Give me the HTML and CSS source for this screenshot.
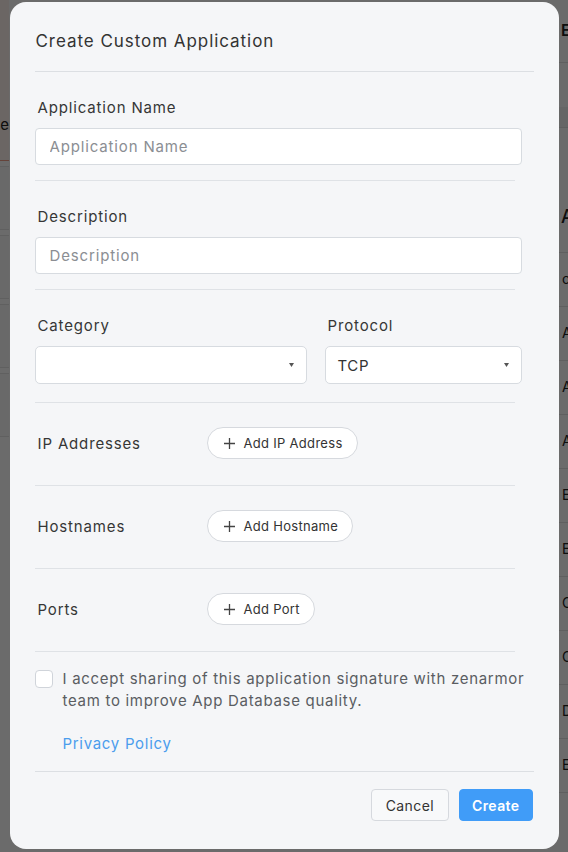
FILE: index.html
```html
<!DOCTYPE html>
<html lang="en">
<head>
    <meta charset="UTF-8">
    <meta name="viewport" content="width=device-width, initial-scale=1.0">
    <title>Create Custom Application</title>
    <link rel="stylesheet" href="styles.css">
</head>
<body>

    <!-- page behind the dialog -->
    <div class="page">
        <div class="page-left">
            <div class="notice"><span>Disable</span></div>
            <div class="lrow"></div>
            <div class="lrow"></div>
            <div class="lrow"></div>
            <div class="lrow"></div>
        </div>
        <div class="page-right">
            <div class="rhead">Engine</div>
            <div class="rband"></div>
            <div class="rtitle">Apps</div>
            <div class="rrow">cloud</div>
            <div class="rrow">Amazon</div>
            <div class="rrow">Apple</div>
            <div class="rrow">Azure</div>
            <div class="rrow">Ebay</div>
            <div class="rrow">Email</div>
            <div class="rrow">Chat</div>
            <div class="rrow">Cdn</div>
            <div class="rrow">Dns</div>
            <div class="rrow">Etc</div>
        </div>
    </div>

    <div class="overlay">
        <div class="modal">
            <div class="modal-title">Create Custom Application</div>

            <div class="field">
                <label for="appName">Application Name</label>
                <input type="text" id="appName" placeholder="Application Name">
            </div>
            <hr class="sep">

            <div class="field">
                <label for="appDesc">Description</label>
                <input type="text" id="appDesc" placeholder="Description">
            </div>
            <hr class="sep">

            <div class="field-pair">
                <div class="field grow">
                    <label>Category</label>
                    <div class="select"><span></span><svg width="5" height="4" viewBox="0 0 5 4"><path d="M0 0h5L2.5 4z" fill="#555"/></svg></div>
                </div>
                <div class="field proto">
                    <label>Protocol</label>
                    <div class="select"><span>TCP</span><svg width="5" height="4" viewBox="0 0 5 4"><path d="M0 0h5L2.5 4z" fill="#555"/></svg></div>
                </div>
            </div>
            <hr class="sep last">

            <div class="list-row">
                <span class="row-label">IP Addresses</span>
                <button class="add-btn"><svg width="11" height="11" viewBox="0 0 11 11"><path d="M5.5 0v11M0 5.5h11" stroke="#444" stroke-width="1.3"/></svg>Add IP Address</button>
            </div>
            <hr class="sep flat">

            <div class="list-row">
                <span class="row-label">Hostnames</span>
                <button class="add-btn"><svg width="11" height="11" viewBox="0 0 11 11"><path d="M5.5 0v11M0 5.5h11" stroke="#444" stroke-width="1.3"/></svg>Add Hostname</button>
            </div>
            <hr class="sep flat">

            <div class="list-row">
                <span class="row-label">Ports</span>
                <button class="add-btn"><svg width="11" height="11" viewBox="0 0 11 11"><path d="M5.5 0v11M0 5.5h11" stroke="#444" stroke-width="1.3"/></svg>Add Port</button>
            </div>
            <hr class="sep flat">

            <div class="consent">
                <span class="check"></span>
                <div>
                    <p>I accept sharing of this application signature with zenarmor team to improve App Database quality.</p>
                    <a href="#" class="policy">Privacy Policy</a>
                </div>
            </div>

            <div class="modal-footer">
                <button class="btn">Cancel</button>
                <button class="btn primary">Create</button>
            </div>
        </div>
    </div>

</body>
</html>
```
FILE: styles.css
```css
body {
    margin: 0;
    background-color: #ffffff;
    font-family: "Inter", "Open Sans", sans-serif;
    color: #333333;
}

/* Page behind the dialog */
.page {
    display: flex;
    justify-content: space-between;
    height: 852px;
    overflow: hidden;
}

.page-left {
    width: 9px;
    overflow: hidden;
    display: flex;
    flex-direction: column;
    align-items: flex-end;
}

.notice {
    width: 120px;
    height: 161px;
    flex-shrink: 0;
    box-sizing: border-box;
    background-color: #fff4ee;
    border-bottom: 1px solid #f0a08a;
    display: flex;
    align-items: flex-end;
    justify-content: flex-end;
    padding-bottom: 26px;
    font-size: 15px;
    color: #222;
}

.lrow {
    width: 120px;
    height: 62px;
    flex-shrink: 0;
    border-top: 1px solid #e4e4e4;
    border-bottom: 1px solid #e4e4e4;
    margin-top: 5px;
    background-color: #fafafa;
}

.page-right {
    width: 9px;
    overflow: hidden;
    padding-left: 1px;
}

.rhead {
    height: 62px;
    line-height: 60px;
    font-size: 16px;
    font-weight: 600;
    color: #222;
    border-bottom: 1px solid #e2e2e2;
    padding-left: 2px;
}

.rband {
    height: 64px;
    border-bottom: 1px solid #e2e2e2;
    margin-bottom: 44px;
    box-shadow: 0 -20px 0 #f4f4f4 inset;
}

.rtitle {
    height: 80px;
    line-height: 90px;
    font-size: 18px;
    font-weight: 500;
    color: #222;
    padding-left: 2px;
    border-bottom: 1px solid #e2e2e2;
}

.rrow {
    height: 53px;
    line-height: 52px;
    font-size: 14px;
    color: #222;
    padding-left: 3px;
    border-bottom: 1px solid #e2e2e2;
}

/* Dim overlay + dialog */
.overlay {
    position: fixed;
    inset: 0;
    background-color: rgba(0, 0, 0, 0.58);
    display: flex;
    justify-content: center;
    align-items: flex-start;
    padding-top: 2px;
}

.modal {
    width: 549px;
    box-sizing: border-box;
    background-color: #f5f6f8;
    border-radius: 16px;
    padding: 27px 25px 28px 25px;
}

.modal-title {
    font-size: 17px;
    line-height: 24px;
    letter-spacing: 0.95px;
    color: #333;
    padding-left: 1px;
    padding-bottom: 18px;
    border-bottom: 1px solid #dcdfe3;
    margin-bottom: 25px;
}

.sep {
    border: none;
    border-top: 1px solid #dfe2e6;
    margin: 15px 0 25px;
    width: 480px;
}

.sep.last {
    margin: 18px 0 0;
}

.sep.flat {
    margin: 0;
}

/* Form fields */
.field {
    display: flex;
    flex-direction: column;
}

.field label {
    font-size: 15px;
    line-height: 22px;
    letter-spacing: 0.85px;
    padding-left: 3px;
    margin-bottom: 9px;
    color: #363636;
}

.field input {
    height: 37px;
    box-sizing: border-box;
    border: 1px solid #d7dbe0;
    border-radius: 4px;
    background-color: #fff;
    padding: 0 14px;
    font-family: inherit;
    font-size: 15px;
    letter-spacing: 0.85px;
    color: #333;
    width: 487px;
}

.field input::placeholder {
    color: #8b8e93;
}

.field-pair {
    display: flex;
    gap: 18px;
    width: 487px;
}

.grow {
    flex: 1;
}

.proto {
    width: 197px;
}

.select {
    height: 38px;
    box-sizing: border-box;
    border: 1px solid #d7dbe0;
    border-radius: 5px;
    background-color: #fff;
    padding: 0 12px 0 12px;
    display: flex;
    align-items: center;
    justify-content: space-between;
    font-size: 15px;
    letter-spacing: 0.6px;
    color: #333;
}

/* IP / host / port rows */
.list-row {
    display: flex;
    align-items: center;
    padding: 24px 0 26px;
}

.row-label {
    width: 169px;
    padding-left: 3px;
    font-size: 15px;
    letter-spacing: 0.85px;
    color: #363636;
}

.add-btn {
    height: 32px;
    box-sizing: border-box;
    border: 1px solid #d6d9de;
    border-radius: 16px;
    background-color: #fff;
    padding: 0 14px 0 16px;
    display: flex;
    align-items: center;
    gap: 9px;
    font-family: inherit;
    font-size: 13px;
    letter-spacing: 0.3px;
    color: #333;
}

/* Consent */
.consent {
    display: flex;
    gap: 10px;
    padding: 16px 0 16px;
    border-bottom: 1px solid #dcdfe3;
}

.check {
    width: 18px;
    height: 18px;
    flex-shrink: 0;
    box-sizing: border-box;
    border: 1px solid #d0d4da;
    border-radius: 4px;
    background-color: #fff;
    margin-top: 2px;
}

.consent p {
    margin: 0 0 21px;
    font-size: 15px;
    line-height: 22px;
    letter-spacing: 0.7px;
    color: #5a5d62;
}

.policy {
    font-size: 15px;
    line-height: 22px;
    letter-spacing: 0.7px;
    color: #4b9ded;
    text-decoration: none;
}

/* Footer buttons */
.modal-footer {
    display: flex;
    justify-content: flex-end;
    gap: 10px;
    padding-top: 17px;
    padding-right: 1px;
}

.btn {
    height: 32px;
    box-sizing: border-box;
    border: 1px solid #d6d9de;
    border-radius: 4px;
    background-color: #f8f9fa;
    padding: 0 14px;
    font-family: inherit;
    font-size: 14px;
    letter-spacing: 0.4px;
    color: #333;
}

.btn.primary {
    border-color: #409cf8;
    background-color: #409cf8;
    color: #fff;
    font-weight: 600;
    padding: 0 12px;
}
```
